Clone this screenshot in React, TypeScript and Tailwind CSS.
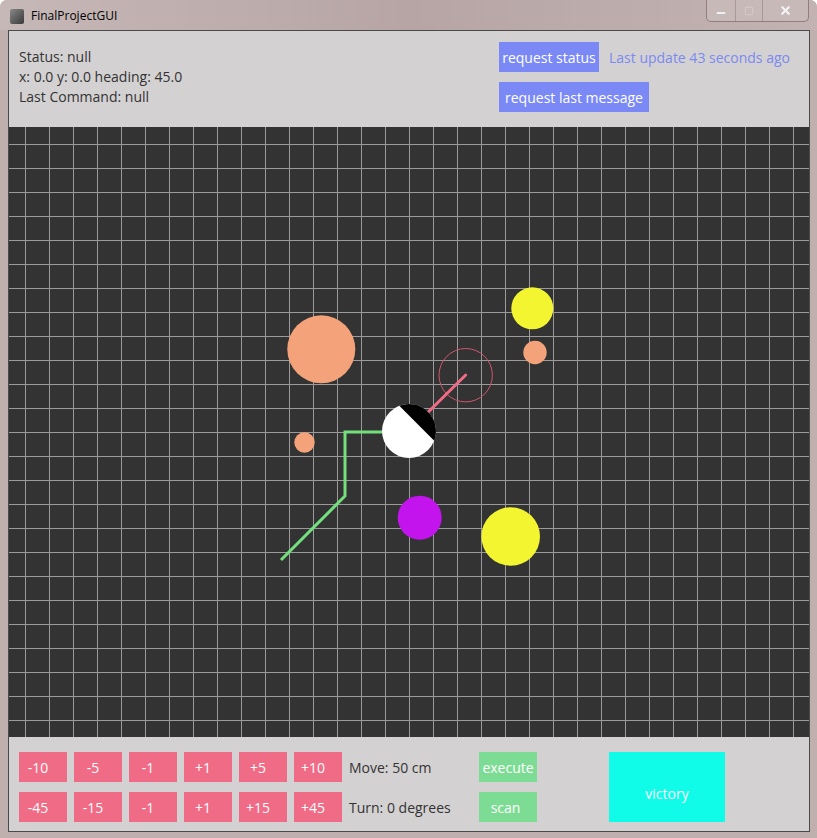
import { Minus, Square, X } from "lucide-react";

const moveSteps = ["-10", "-5", "-1", "+1", "+5", "+10"];
const turnSteps = ["-45", "-15", "-1", "+1", "+15", "+45"];

const vLines = Array.from({ length: 33 }, (_, i) => 16.5 + i * 24);
const hLines = Array.from({ length: 26 }, (_, i) => 17.5 + i * 24);

function StepButton({ label }: { label: string }) {
  return (
    <button className="flex h-[30px] w-[48px] items-center justify-center bg-[#f06b85] pr-[10px] text-[14px] text-white">
      {label}
    </button>
  );
}

function Field() {
  return (
    <svg width={800} height={610} className="block">
      <rect width={800} height={610} fill="#333333" />
      {vLines.map((x) => (
        <line key={"v" + x} x1={x} y1={0} x2={x} y2={610} stroke="#9b9b9b" strokeWidth={1} />
      ))}
      {hLines.map((y) => (
        <line key={"h" + y} x1={0} y1={y} x2={800} y2={y} stroke="#9b9b9b" strokeWidth={1} />
      ))}

      {/* obstacles */}
      <circle cx={312.3} cy={222.3} r={34} fill="#f4a27a" />
      <circle cx={523.3} cy={181.3} r={21} fill="#f3f531" />
      <circle cx={526} cy={225.5} r={11.7} fill="#f4a27a" />
      <circle cx={295.5} cy={315.5} r={10.2} fill="#f4a27a" />
      <circle cx={410.7} cy={390.7} r={22} fill="#c414ee" />
      <circle cx={501.7} cy={409.5} r={29.3} fill="#f3f531" />

      {/* target + heading */}
      <circle cx={456.7} cy={248.2} r={26.7} fill="none" stroke="#d0566f" strokeWidth={1} />
      <line x1={400} y1={304} x2={456.7} y2={248} stroke="#f06b85" strokeWidth={3} strokeLinecap="round" />

      {/* path */}
      <polyline
        points="400,305 336,305 336,369 272,433"
        fill="none"
        stroke="#72e07c"
        strokeWidth={3}
      />

      {/* robot */}
      <circle cx={400} cy={304} r={27} fill="#ffffff" />
      <path d="M 390.3 278.8 A 27 27 0 0 1 425.2 313.7 Z" fill="#000000" />
    </svg>
  );
}

export default function App() {
  return (
    <div
      className="relative h-[838px] w-[817px] overflow-hidden rounded-t-[7px] bg-[#bfafad] text-[#333333]"
      style={{ fontFamily: '"Open Sans", "Noto Sans", sans-serif' }}
    >
      {/* Title bar */}
      <div className="flex h-[30px] items-start justify-between bg-gradient-to-r from-[#c6b8b7] via-[#b6a5a4] to-[#c2b3b2]">
        <div className="flex items-center gap-[7px] pl-[10px] pt-[8px]">
          <div className="h-[15px] w-[14px] rounded-[2px] bg-gradient-to-br from-[#8a8a8a] to-[#3a3a3a]" />
          <span className="text-[12px] leading-[16px] text-black">FinalProjectGUI</span>
        </div>
        <div className="mr-[8px] flex h-[22px] overflow-hidden rounded-b-[5px] border border-t-0 border-[#8e7f7e] bg-[#c7b9b8]">
          <div className="flex w-[29px] items-center justify-center border-r border-[#a89998]">
            <Minus size={12} strokeWidth={4} className="mt-[4px] text-[#eef0f6]" />
          </div>
          <div className="flex w-[27px] items-center justify-center border-r border-[#a89998]">
            <Square size={10} strokeWidth={2} className="text-[#d8cccb]" />
          </div>
          <div className="flex w-[45px] items-center justify-center">
            <X size={13} strokeWidth={4} className="text-[#f4f4f6]" />
          </div>
        </div>
      </div>

      {/* Client area */}
      <div className="ml-[8px] w-[802px] border border-[#4a4a4a] bg-[#d3d1d2]">
        {/* Top panel */}
        <div className="flex h-[96px] justify-between">
          <div className="pl-[10px] pt-[16px] text-[14px] leading-[20px]">
            <div>Status: null</div>
            <div>x: 0.0 y: 0.0 heading: 45.0</div>
            <div>Last Command: null</div>
          </div>
          <div className="mr-[10px] flex w-[300px] flex-col gap-[10px] pt-[11px]">
            <div className="flex items-center gap-[10px]">
              <button className="h-[30px] w-[100px] bg-[#7a89f5] text-[14px] text-white">
                request status
              </button>
              <span className="text-[14px] text-[#7b8af0]">Last update 43 seconds ago</span>
            </div>
            <button className="h-[30px] w-[150px] bg-[#7a89f5] text-[14px] text-white">
              request last message
            </button>
          </div>
        </div>

        <Field />

        {/* Bottom panel */}
        <div className="flex h-[94px] items-start pl-[10px] pt-[15px]">
          <div className="flex flex-col gap-[10px]">
            <div className="flex items-center gap-[7px]">
              {moveSteps.map((s) => (
                <StepButton key={"m" + s} label={s} />
              ))}
              <span className="text-[14px]">Move: 50 cm</span>
            </div>
            <div className="flex items-center gap-[7px]">
              {turnSteps.map((s) => (
                <StepButton key={"t" + s} label={s} />
              ))}
              <span className="text-[14px]">Turn: 0 degrees</span>
            </div>
          </div>
          <div className="ml-auto flex w-[330px] gap-[72px]">
            <div className="flex flex-col gap-[10px]">
              <button className="h-[30px] w-[58px] bg-[#7ddc94] text-[14px] text-white">execute</button>
              <button className="h-[30px] w-[58px] bg-[#7ddc94] pr-[5px] text-[14px] text-white">scan</button>
            </div>
            <button className="flex h-[70px] w-[116px] items-end justify-center bg-[#10fbe8] pb-[18px] text-[14px] text-white">
              victory
            </button>
          </div>
        </div>
      </div>
    </div>
  );
}
